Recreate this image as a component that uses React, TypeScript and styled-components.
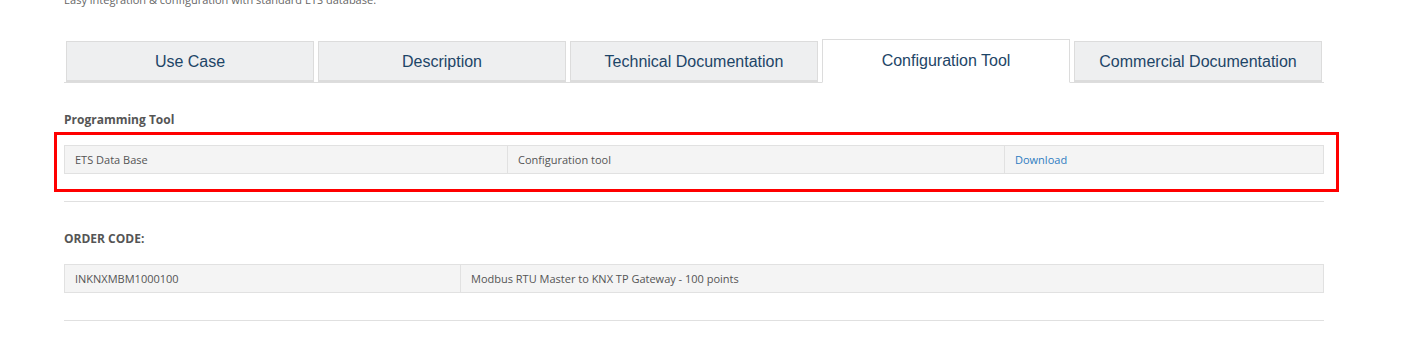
import styled, { createGlobalStyle } from "styled-components";

const GlobalStyle = createGlobalStyle`
  body {
    margin: 0;
    background: #ffffff;
    font-family: "Open Sans", "Liberation Sans", sans-serif;
  }
`;

const Page = styled.div`
  width: 1260px;
  margin-left: 64px;
`;

const Intro = styled.p`
  margin: -8px 0 0;
  font-size: 11px;
  line-height: 16px;
  color: #666666;
`;

const TabBar = styled.div`
  display: flex;
  align-items: flex-end;
  height: 43px;
  margin-top: 31px;
  border-bottom: 1px solid #dddddd;
`;

const TabSlot = styled.div`
  flex: 0 0 252px;
  box-sizing: border-box;
  padding: 0 2px;
  display: flex;
  align-items: flex-end;
  height: 100%;
`;

const Tab = styled.div<{ $active?: boolean }>`
  flex: 1;
  box-sizing: border-box;
  display: flex;
  align-items: center;
  justify-content: center;
  padding-top: ${(p) => (p.$active ? "0" : "2px")};
  height: ${(p) => (p.$active ? "44px" : "41px")};
  margin-bottom: ${(p) => (p.$active ? "-1px" : "0")};
  border: 1px solid #dcdcdc;
  border-bottom: ${(p) => (p.$active ? "1px solid #ffffff" : "2px solid #dcdcdc")};
  background: ${(p) => (p.$active ? "#ffffff" : "#eeeff0")};
  font-family: "Liberation Sans", Arial, sans-serif;
  font-size: 16px;
  color: #1d4567;
  cursor: pointer;
`;

const Heading = styled.h4`
  margin: 29px 0 0;
  font-size: 12px;
  line-height: 16px;
  font-weight: 700;
  color: #555555;
`;

const TableWrap = styled.div`
  position: relative;
  margin-top: 17px;
`;

const Highlight = styled.div`
  position: absolute;
  left: -10px;
  top: -13px;
  right: -15px;
  bottom: -18px;
  border: 3px solid #ff0000;
  pointer-events: none;
`;

const Table = styled.table`
  width: 100%;
  border-collapse: collapse;
  table-layout: fixed;
`;

const Col = styled.col<{ $w?: number }>`
  width: ${(p) => (p.$w ? `${p.$w}px` : "auto")};
`;

const Cell = styled.td`
  border: 1px solid #e1e1e1;
  background: #f4f4f4;
  padding: 6px 10px;
  font-size: 11px;
  line-height: 15px;
  color: #555555;
  white-space: nowrap;
`;

const Link = styled.a`
  color: #2f7cc1;
  text-decoration: none;
`;

const Divider = styled.div`
  margin-top: 27px;
  height: 1px;
  background: #e0e0e0;
`;

const tabs = [
  "Use Case",
  "Description",
  "Technical Documentation",
  "Configuration Tool",
  "Commercial Documentation",
];

export default function App() {
  return (
    <>
      <GlobalStyle />
      <Page>
        <Intro>Easy integration &amp; configuration with standard ETS database.</Intro>

        <TabBar>
          {tabs.map((t) => (
            <TabSlot key={t}>
              <Tab $active={t === "Configuration Tool"}>{t}</Tab>
            </TabSlot>
          ))}
        </TabBar>

        <Heading>Programming Tool</Heading>
        <TableWrap>
          <Table>
            <colgroup>
              <Col $w={443} />
              <Col $w={497} />
              <Col />
            </colgroup>
            <tbody>
              <tr>
                <Cell>ETS Data Base</Cell>
                <Cell>Configuration tool</Cell>
                <Cell>
                  <Link href="#">Download</Link>
                </Cell>
              </tr>
            </tbody>
          </Table>
          <Highlight />
        </TableWrap>
        <Divider />

        <Heading>ORDER CODE:</Heading>
        <TableWrap>
          <Table>
            <colgroup>
              <Col $w={396} />
              <Col />
            </colgroup>
            <tbody>
              <tr>
                <Cell>INKNXMBM1000100</Cell>
                <Cell>Modbus RTU Master to KNX TP Gateway - 100 points</Cell>
              </tr>
            </tbody>
          </Table>
        </TableWrap>
        <Divider />
      </Page>
    </>
  );
}
